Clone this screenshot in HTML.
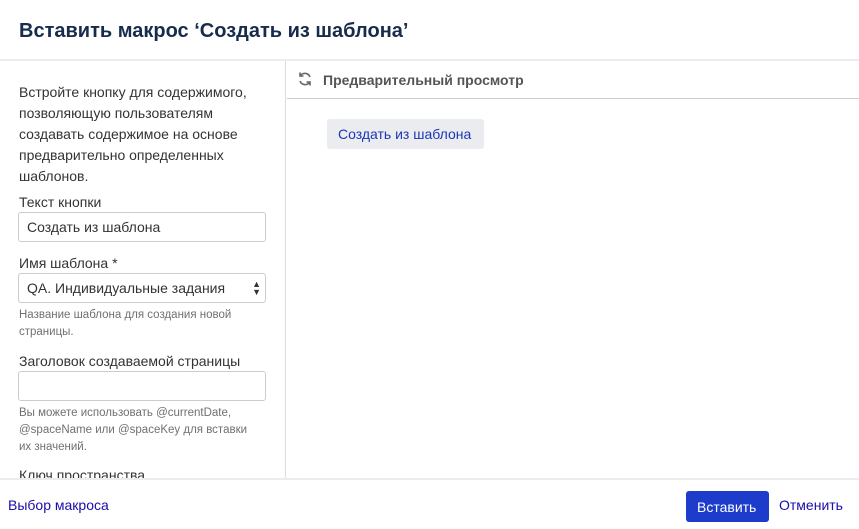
<!DOCTYPE html>
<html><head><meta charset="utf-8"><style>
*{box-sizing:border-box;margin:0;padding:0}
body{width:859px;height:529px;overflow:hidden;background:#fff;font-family:"Liberation Sans",sans-serif;color:#172b4d;position:relative}
.hdr{position:absolute;left:0;top:0;width:859px;height:61px;border-bottom:2px solid #ebecf0}
.hdr h1{position:absolute;left:19px;top:20px;font-size:20px;font-weight:bold;color:#172b4d;letter-spacing:0}
.left{position:absolute;left:0;top:61px;width:286px;height:417px;border-right:1px solid #ddd;overflow:hidden}
.desc{position:absolute;left:19px;top:21px;font-size:14px;line-height:21px;color:#333;width:250px}
.lbl{position:absolute;left:19px;font-size:14px;color:#333}
.inp{position:absolute;left:18px;width:248px;height:30px;border:1px solid #ccc;border-radius:3px;font-size:14px;color:#333;padding:6px 0 0 8px}
.hint{position:absolute;left:19px;font-size:11.5px;line-height:17px;color:#707070;width:238px}
.prevh{position:absolute;left:287px;top:61px;width:572px;height:38px;border-bottom:1px solid #ccc}
.prevh span{position:absolute;left:36px;top:11px;font-size:14px;font-weight:bold;color:#555}
.pbtn{position:absolute;left:327px;top:119px;width:157px;height:30px;background:#ebecf0;border-radius:3px;font-size:14px;color:#1b37b5;padding:7px 0 0 11px}
.ftr{position:absolute;left:0;top:478px;width:859px;height:51px;border-top:2px solid #ebecf0;background:#fff}
.ftr a{position:absolute;font-size:14px;color:#1a0dab;text-decoration:none}
.ins{position:absolute;left:686px;top:11px;width:83px;height:31px;background:#1d3ccc;border-radius:3px;color:#fff;font-size:14px;padding:8px 0 0 11px}
</style></head><body>
<div class="hdr"><h1>Вставить макрос ‘Создать из шаблона’</h1></div>
<div class="left">
<div class="desc">Встройте кнопку для содержимого, позволяющую пользователям создавать содержимое на основе предварительно определенных шаблонов.</div>
<div class="lbl" style="top:133px">Текст кнопки</div>
<div class="inp" style="top:151px">Создать из шаблона</div>
<div class="lbl" style="top:194px">Имя шаблона *</div>
<div class="inp" style="top:212px">QA. Индивидуальные задания<span style="position:absolute;right:4px;top:6px;font-size:9px;line-height:8px;color:#333">▲<br>▼</span></div>
<div class="hint" style="top:246px">Название шаблона для создания новой страницы.</div>
<div class="lbl" style="top:292px">Заголовок создаваемой страницы</div>
<div class="inp" style="top:310px"></div>
<div class="hint" style="top:344px">Вы можете использовать @currentDate, @spaceName или @spaceKey для вставки их значений.</div>
<div class="lbl" style="top:406px">Ключ пространства</div>
</div>
<div class="prevh">
<svg style="position:absolute;left:10px;top:10px" width="16" height="16" viewBox="0 0 16 16" fill="none" stroke="#666" stroke-width="1.6"><path d="M13 6A5.5 5.5 0 0 0 3.5 4.5"/><path d="M3 10a5.5 5.5 0 0 0 9.5 1.5"/><path d="M3 1.5v3.5h3.5" /><path d="M13 14.5V11H9.5"/></svg>
<span>Предварительный просмотр</span></div>
<div class="pbtn">Создать из шаблона</div>
<div class="ftr">
<a style="left:8px;top:17px">Выбор макроса</a>
<div class="ins">Вставить</div>
<a style="left:779px;top:17px">Отменить</a>
</div>
</body></html>
